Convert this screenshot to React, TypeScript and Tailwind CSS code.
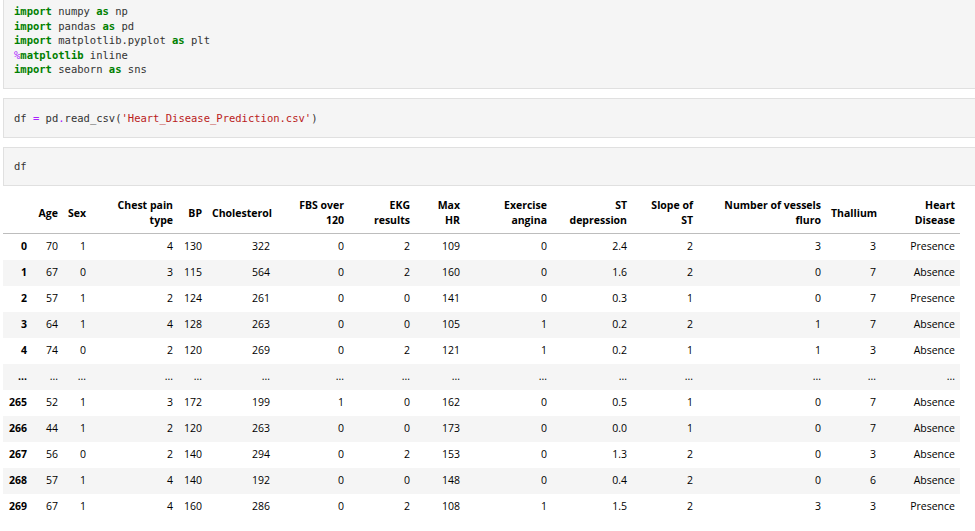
import React from "react";

type Col = { label: React.ReactNode; w: number };

const cols: Col[] = [
  { label: "", w: 29 },
  { label: "Age", w: 31 },
  { label: "Sex", w: 28 },
  { label: <>Chest pain<br />type</>, w: 87 },
  { label: "BP", w: 29 },
  { label: "Cholesterol", w: 68 },
  { label: <>FBS over<br />120</>, w: 74 },
  { label: <>EKG<br />results</>, w: 66 },
  { label: <>Max<br />HR</>, w: 50 },
  { label: <>Exercise<br />angina</>, w: 87 },
  { label: <>ST<br />depression</>, w: 80 },
  { label: <>Slope of<br />ST</>, w: 66 },
  { label: <>Number of vessels<br />fluro</>, w: 128 },
  { label: "Thallium", w: 55 },
  { label: <>Heart<br />Disease</>, w: 79 },
];

const rows: string[][] = [
  ["0", "70", "1", "4", "130", "322", "0", "2", "109", "0", "2.4", "2", "3", "3", "Presence"],
  ["1", "67", "0", "3", "115", "564", "0", "2", "160", "0", "1.6", "2", "0", "7", "Absence"],
  ["2", "57", "1", "2", "124", "261", "0", "0", "141", "0", "0.3", "1", "0", "7", "Presence"],
  ["3", "64", "1", "4", "128", "263", "0", "0", "105", "1", "0.2", "2", "1", "7", "Absence"],
  ["4", "74", "0", "2", "120", "269", "0", "2", "121", "1", "0.2", "1", "1", "3", "Absence"],
  Array(15).fill("..."),
  ["265", "52", "1", "3", "172", "199", "1", "0", "162", "0", "0.5", "1", "0", "7", "Absence"],
  ["266", "44", "1", "2", "120", "263", "0", "0", "173", "0", "0.0", "1", "0", "7", "Absence"],
  ["267", "56", "0", "2", "140", "294", "0", "2", "153", "0", "1.3", "2", "0", "3", "Absence"],
  ["268", "57", "1", "4", "140", "192", "0", "0", "148", "0", "0.4", "2", "0", "6", "Absence"],
  ["269", "67", "1", "4", "160", "286", "0", "2", "108", "1", "1.5", "2", "3", "3", "Presence"],
];

const kw = "font-bold text-[#008000]";
const op = "text-[#aa22ff]";

function Cell({ children }: { children: React.ReactNode }) {
  return (
    <div className="-mr-4 border border-[#e0e0e0] bg-[#f5f5f5] px-[10px] py-[11.5px] font-['DejaVu_Sans_Mono',monospace] text-[10.5px] leading-[14.5px] text-[#333] whitespace-pre">
      {children}
    </div>
  );
}

export default function App() {
  return (
    <div className="h-[531px] w-[975px] overflow-hidden bg-white pl-[3px]">
      <div className="-mt-[8.5px] flex flex-col gap-[9px]">
        <Cell>
          <div><span className={kw}>import</span> numpy <span className={kw}>as</span> np</div>
          <div><span className={kw}>import</span> pandas <span className={kw}>as</span> pd</div>
          <div><span className={kw}>import</span> matplotlib.pyplot <span className={kw}>as</span> plt</div>
          <div><span className={op}>%</span><span className={kw}>matplotlib</span> inline</div>
          <div><span className={kw}>import</span> seaborn <span className={kw}>as</span> sns</div>
        </Cell>
        <Cell>
          <div>
            df <span className={op}>=</span> pd<span className={op}>.</span>read_csv(<span className="text-[#ba2121]">'Heart_Disease_Prediction.csv'</span>)
          </div>
        </Cell>
        <Cell>
          <div>df</div>
        </Cell>
      </div>
      <table className="mt-[9px] w-[957px] table-fixed border-collapse font-['Open_Sans',sans-serif] text-[10.5px] text-black">
        <colgroup>
          {cols.map((c, i) => (
            <col key={i} style={{ width: c.w }} />
          ))}
        </colgroup>
        <thead>
          <tr className="border-b border-[#bdbdbd]">
            {cols.map((c, i) => (
              <th key={i} className="px-[5px] pt-[3px] pb-[5px] text-right align-middle font-bold leading-[15px]">
                {c.label}
              </th>
            ))}
          </tr>
        </thead>
        <tbody>
          {rows.map((r, ri) => (
            <tr key={ri} className={ri % 2 === 1 ? "h-[26px] bg-[#f5f5f5]" : "h-[26px]"}>
              {r.map((v, ci) => (
                <td
                  key={ci}
                  className={
                    ci === 0
                      ? "overflow-hidden px-[5px] text-right align-middle font-bold"
                      : "overflow-hidden px-[5px] text-right align-middle"
                  }
                >
                  {v}
                </td>
              ))}
            </tr>
          ))}
        </tbody>
      </table>
    </div>
  );
}
